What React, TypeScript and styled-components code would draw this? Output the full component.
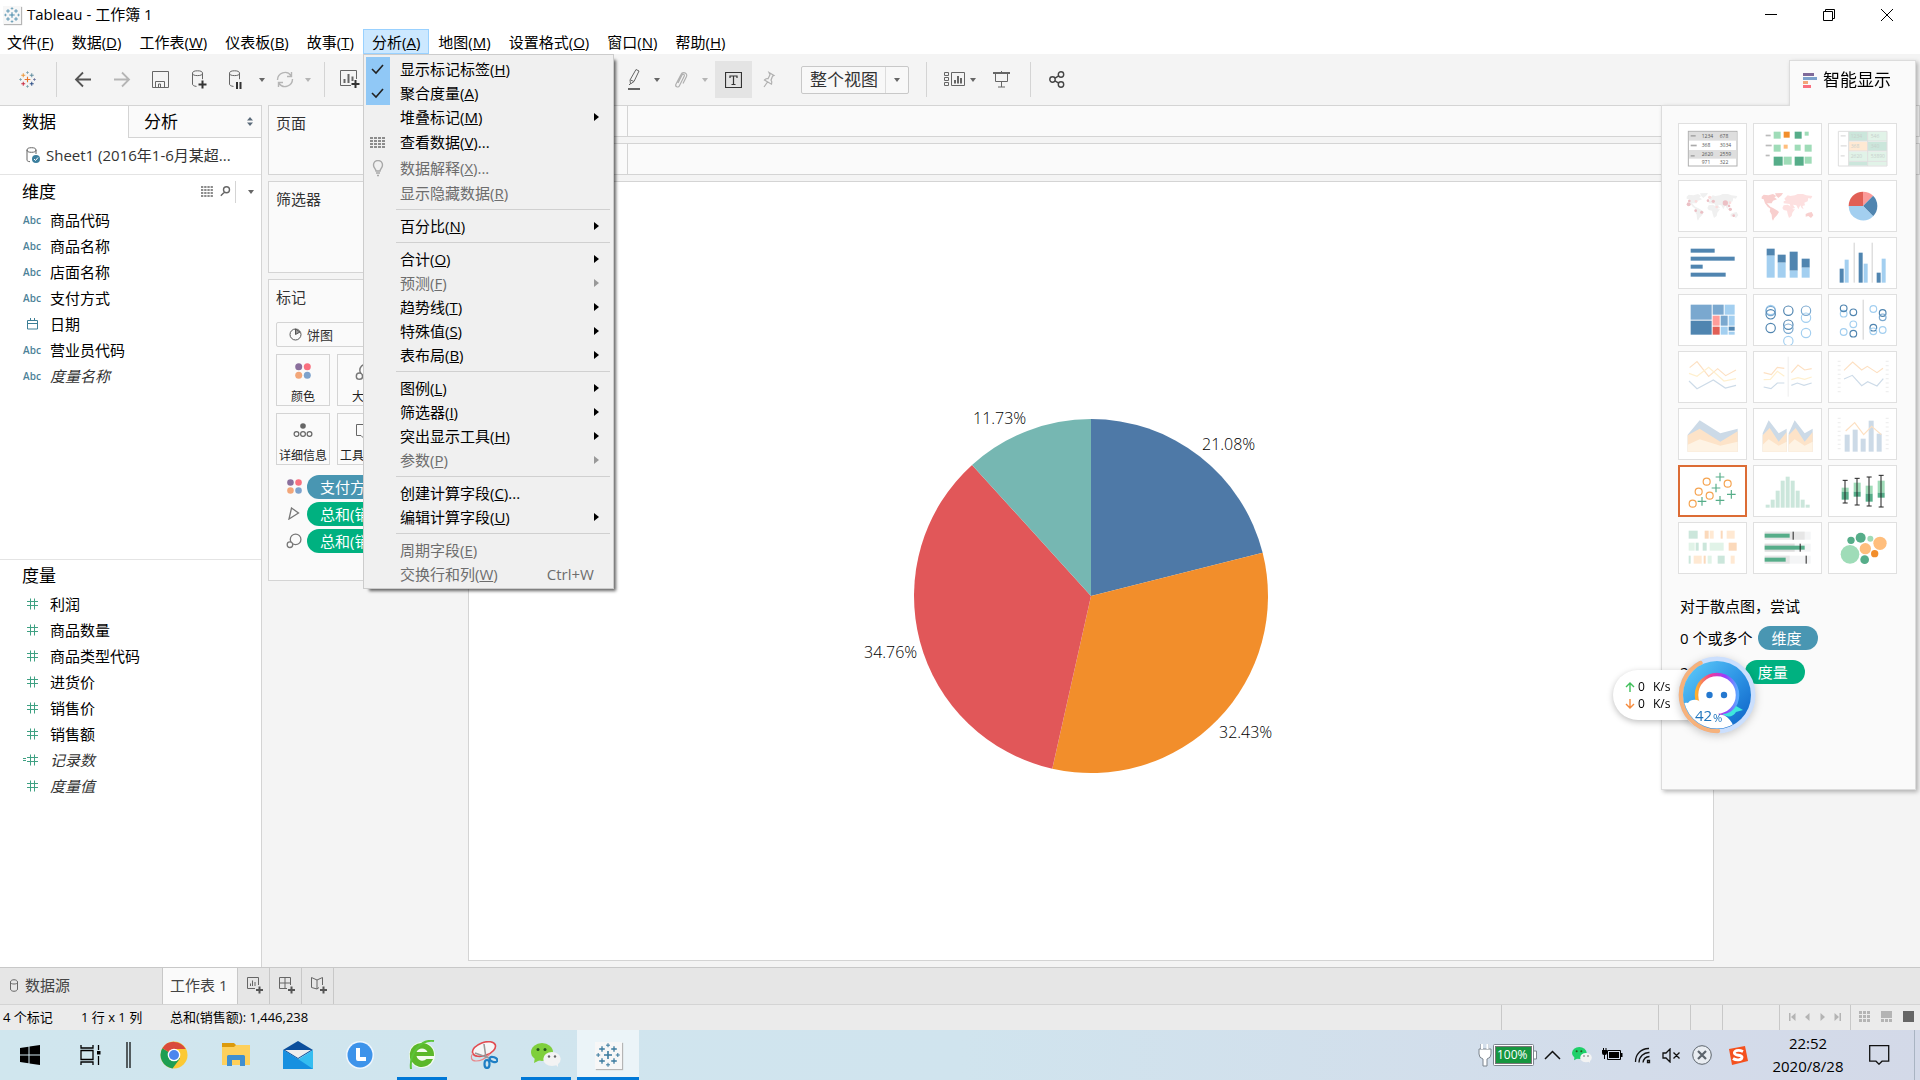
import React from 'react';
import styled, { createGlobalStyle } from 'styled-components';

const Global = createGlobalStyle`
  *, *::before, *::after { box-sizing: border-box; }
  body {
    margin: 0;
    font-family: "Open Sans", "Noto Sans CJK SC", sans-serif;
    font-size: 15px;
    line-height: 24px;
    color: #000;
    overflow: hidden;
  }
  button, select {
    font: inherit;
    color: inherit;
    border: 0;
    padding: 0;
    margin: 0;
    background: transparent;
    border-radius: 0;
    white-space: nowrap;
  }
  svg { display: block; flex: none; }
  ul { list-style: none; margin: 0; padding: 0; }
  h2, h3 { margin: 0; font-weight: 400; }
`;

const line = '#d4d4d4';

const App_ = styled.div`
  display: flex;
  flex-direction: column;
  height: 100vh;
  background: #f4f4f4;
`;

/* ---------- title bar and menu bar ---------- */

const TitleBar = styled.header`
  display: flex;
  align-items: center;
  height: 29px;
  padding: 0 4px 0 3px;
  background: #fff;
`;
const Title = styled.span`
  flex: 1;
  padding: 0 0 2px 6px;
`;
const WinButton = styled.button`
  display: flex;
  align-items: center;
  justify-content: center;
  width: 58px;
  height: 29px;
`;
const AppBadge = styled.span<{ $size: number }>`
  display: flex;
  align-items: center;
  justify-content: center;
  width: ${p => p.$size}px;
  height: ${p => p.$size}px;
  background: #f7f7f7;
  box-shadow: 1px 1px 1px #b5b5b5;
`;
const MenuBar = styled.nav`
  display: flex;
  height: 25px;
  margin-left: -2px;
  background: #fff;
`;
const MenuSlot = styled.div`
  position: relative;
`;
const MenuTitle = styled.button<{ $open?: boolean }>`
  height: 25px;
  line-height: 22px;
  padding: 0 8px;
  border: 1px solid ${p => (p.$open ? '#99d1ff' : 'transparent')};
  background: ${p => (p.$open ? '#cce8ff' : 'transparent')};
`;
const MenuPanel = styled.div`
  position: absolute;
  z-index: 10;
  top: 25px;
  left: 0;
  width: 251px;
  padding: 2px 3px 2px 2px;
  border: 1px solid #ccc;
  background: #f0f0f0;
  box-shadow: 4px 4px 3px -2px rgba(0, 0, 0, 0.6);
`;
const MenuRow = styled.button<{ $tall?: boolean }>`
  display: grid;
  grid-template-columns: 24px 1fr auto 16px;
  align-items: center;
  width: 100%;
  height: ${p => (p.$tall ? 26 : 24)}px;
  text-align: left;
  &:disabled { color: #6d6d6d; }
`;
const MenuMark = styled.span<{ $checked?: boolean }>`
  display: flex;
  align-items: center;
  justify-content: center;
  height: 100%;
  background: ${p => (p.$checked ? '#90c8f6' : 'transparent')};
`;
const MenuText = styled.span`
  padding-left: 10px;
`;
const MenuRule = styled.div`
  height: 9px;
  margin: 0 0 0 30px;
  display: flex;
  align-items: center;
  &::before {
    content: "";
    flex: 1;
    height: 1px;
    background: #d0d0d0;
  }
`;

/* ---------- toolbar ---------- */

const ToolBar = styled.div`
  display: flex;
  align-items: center;
  height: 51px;
`;
const Tool = styled.button<{ $w: number; $on?: boolean }>`
  display: flex;
  align-items: center;
  justify-content: center;
  flex: none;
  width: ${p => p.$w}px;
  height: 37px;
  background: ${p => (p.$on ? '#e4e4e4' : 'transparent')};
`;
const ToolRule = styled.span<{ $w: number }>`
  display: flex;
  justify-content: center;
  flex: none;
  width: ${p => p.$w}px;
  &::before {
    content: "";
    width: 1px;
    height: 35px;
    background: ${line};
  }
`;
const Gap = styled.span<{ $w: number }>`
  flex: none;
  width: ${p => p.$w}px;
`;
const FitBox = styled.label`
  display: flex;
  align-items: center;
  width: 108px;
  height: 28px;
  border: 1px solid #c8c8c8;
  border-radius: 2px;
  background: #f8f8f8;
  color: #333;
`;
const FitSelect = styled.select`
  appearance: none;
  flex: 1;
  min-width: 0;
  height: 26px;
  padding-left: 8px;
  font-size: 17px;
  line-height: 26px;
  border-right: 1px solid #dcdcdc;
`;
const FitCaret = styled.span`
  display: flex;
  justify-content: center;
  width: 22px;
`;

/* ---------- workspace ---------- */

const Workspace = styled.div`
  display: flex;
  flex: 1;
  min-height: 0;
`;
const Sidebar = styled.aside`
  display: flex;
  flex-direction: column;
  width: 262px;
  background: #fff;
  border-top: 1px solid ${line};
  border-right: 1px solid ${line};
`;
const SideTabs = styled.div`
  display: flex;
  height: 32px;
`;
const SideTab = styled.button<{ $active?: boolean }>`
  display: flex;
  align-items: center;
  justify-content: space-between;
  flex: ${p => (p.$active ? '0 0 128px' : '1')};
  padding: 0 8px 0 ${p => (p.$active ? 22 : 15)}px;
  font-size: 17px;
  background: ${p => (p.$active ? '#fff' : '#fafafa')};
  border: 0 solid ${line};
  border-width: ${p => (p.$active ? '0' : '0 0 1px 1px')};
`;
const Source = styled.div`
  display: flex;
  align-items: center;
  gap: 5px;
  height: 37px;
  padding: 0 0 2px 26px;
  color: #333;
  border-bottom: 1px solid #e4e4e4;
`;
const FieldGroup = styled.section<{ $grow?: boolean }>`
  flex: ${p => (p.$grow ? '1' : '0 0 385px')};
  padding-top: ${p => (p.$grow ? 0 : 1)}px;
  border-bottom: ${p => (p.$grow ? '0' : '1px')} solid #e4e4e4;
`;
const FieldHead = styled.div`
  display: flex;
  align-items: center;
  height: 31px;
  padding: 0 6px 0 22px;
`;
const FieldTitle = styled.h2`
  flex: 1;
  font-size: 17px;
`;
const HeadTool = styled.button<{ $ruled?: boolean }>`
  display: flex;
  align-items: center;
  justify-content: flex-end;
  width: ${p => (p.$ruled ? 20 : 18)}px;
  height: 22px;
  margin-left: ${p => (p.$ruled ? 4 : 0)}px;
  border-left: ${p => (p.$ruled ? 1 : 0)}px solid ${line};
`;
const Field = styled.li<{ $computed?: boolean }>`
  display: grid;
  grid-template-columns: 28px 1fr;
  align-items: center;
  height: 26px;
  padding-left: 22px;
  font-style: ${p => (p.$computed ? 'italic' : 'normal')};
  color: ${p => (p.$computed ? '#333' : '#000')};
`;
const FieldIcon = styled.span`
  display: flex;
  justify-content: center;
  width: 20px;
  font: 600 10px/16px "Open Sans", sans-serif;
  color: #4c8298;
`;

const Shelves = styled.div`
  display: flex;
  flex-direction: column;
  gap: 6px;
  width: 206px;
  padding: 0 7px 0 6px;
`;
const Card = styled.section<{ $h?: number }>`
  min-height: ${p => p.$h || 0}px;
  padding: 0 7px 26px;
  border: 1px solid ${line};
  background: #fafafa;
  color: #333;
`;
const CardTitle = styled.h3`
  height: 36px;
  font-size: 15px;
  line-height: 34px;
`;
const MarkType = styled.label`
  display: flex;
  align-items: center;
  gap: 5px;
  height: 25px;
  margin: 6px 0 7px;
  padding-left: 12px;
  border: 1px solid ${line};
  border-radius: 2px;
`;
const MarkSelect = styled.select`
  appearance: none;
  flex: 1;
  height: 22px;
  font-size: 13px;
  line-height: 22px;
`;
const MarkGrid = styled.div`
  display: grid;
  grid-template-columns: repeat(3, 54px);
  gap: 7px;
  padding-bottom: 8px;
`;
const MarkButton = styled.button`
  display: flex;
  flex-direction: column;
  align-items: center;
  justify-content: space-between;
  height: 52px;
  padding-top: 8px;
  font-size: 12px;
  line-height: 16px;
  color: #222;
  border: 1px solid ${line};
`;
const PillRow = styled.div`
  display: grid;
  grid-template-columns: 31px 1fr;
  align-items: center;
  height: 27px;
`;
const PillIcon = styled.span`
  display: flex;
  justify-content: center;
  width: 36px;
`;
const Pill = styled.span<{ $tone: 'dim' | 'measure'; $short?: boolean }>`
  display: inline-block;
  width: ${p => (p.$short ? '60px' : 'auto')};
  height: 24px;
  padding-left: 13px;
  border-radius: 12px;
  color: #fff;
  background: ${p => (p.$tone === 'dim' ? '#4996b2' : '#00b180')};
`;

const Stage = styled.main`
  display: flex;
  flex-direction: column;
  flex: 1;
  min-width: 0;
`;
const Shelf = styled.div`
  flex: none;
  height: 32px;
  margin-bottom: 6px;
  border: 1px solid ${line};
  background: #fafafa;
`;
const ShelfLabel = styled.div`
  width: 159px;
  height: 30px;
  border-right: 1px solid ${line};
`;
const Sheet = styled.div`
  display: flex;
  align-items: center;
  justify-content: center;
  flex: 1;
  margin: 0 206px 6px 0;
  padding-top: 49px;
  border: 1px solid ${line};
  background: #fff;
`;
const PieLabel = styled.text`
  font: 300 16px "Open Sans", sans-serif;
  fill: #000;
`;

/* ---------- show me ---------- */

const ShowMe = styled.aside`
  position: absolute;
  z-index: 4;
  top: 60px;
  right: 4px;
  width: 255px;
  filter: drop-shadow(2px 2px 2px rgba(0, 0, 0, 0.28));
`;
const ShowTab = styled.button`
  position: relative;
  z-index: 1;
  display: flex;
  align-items: center;
  gap: 5px;
  width: 127px;
  height: 46px;
  margin: 0 0 -1px auto;
  padding: 0 0 7px 13px;
  font-size: 17px;
  border: 1px solid #dcdcdc;
  border-bottom: 0;
  background: #fafafa;
`;
const ShowBody = styled.div`
  padding: 17px 16px 105px;
  border: 1px solid #dcdcdc;
  background: #fafafa;
`;
const Thumbs = styled.div`
  display: grid;
  grid-template-columns: repeat(3, 69px);
  gap: 5px 6px;
`;
const Thumb = styled.button<{ $picked?: boolean }>`
  display: flex;
  align-items: center;
  justify-content: center;
  height: 52px;
  overflow: hidden;
  background: #fff;
  border: ${p => (p.$picked ? '2px solid #dc6c35' : '1px solid #e0e0e0')};
`;
const Hint = styled.p<{ $gap: number }>`
  display: flex;
  align-items: center;
  gap: 6px;
  height: 24px;
  margin: ${p => p.$gap}px 0 0 2px;
`;

const Meter = styled.div`
  position: absolute;
  z-index: 6;
  top: 656px;
  right: 164px;
  display: flex;
  align-items: center;
  width: 143px;
`;
const Rates = styled.div`
  width: 104px;
  height: 50px;
  padding: 8px 0 0 12px;
  border-radius: 25px 0 0 25px;
  background: #fff;
  box-shadow: 0 2px 6px rgba(0, 0, 0, 0.25);
  font-size: 12px;
  line-height: 17px;
`;
const Rate = styled.div`
  display: grid;
  grid-template-columns: 13px 15px 1fr;
  align-items: center;
`;
const Ball = styled.svg`
  margin-left: -39px;
  filter: drop-shadow(0 2px 4px rgba(0, 0, 0, 0.2));
`;

/* ---------- sheet tabs and status ---------- */

const SheetTabs = styled.div`
  display: flex;
  flex: none;
  height: 37px;
  border-top: 1px solid #c8c8c8;
  background: #e6e6e6;
  color: #444;
`;
const SheetTab = styled.button<{ $w: number; $active?: boolean }>`
  display: flex;
  align-items: center;
  gap: 6px;
  width: ${p => p.$w}px;
  padding: 0 0 2px ${p => (p.$active ? 7 : p.$w > 100 ? 10 : 9)}px;
  background: ${p => (p.$active ? '#fafafa' : 'transparent')};
  border-right: 1px solid #c8c8c8;
`;
const StatusBar = styled.footer`
  display: flex;
  flex: none;
  height: 26px;
  border-top: 1px solid ${line};
  background: #ebebeb;
  font-size: 13px;
`;
const StatusText = styled.span<{ $w?: number }>`
  width: ${p => (p.$w ? p.$w + 'px' : 'auto')};
  flex: ${p => (p.$w ? 'none' : '1')};
  padding-left: 3px;
  line-height: 24px;
`;
const StatusCell = styled.div<{ $w: number; $views?: boolean }>`
  display: flex;
  align-items: center;
  justify-content: ${p => (p.$views ? 'space-between' : 'space-evenly')};
  flex: none;
  width: ${p => p.$w}px;
  padding: ${p => (p.$views ? '0 6px 2px 8px' : '0 0 2px')};
  border-left: 1px solid #c8c8c8;
`;

/* ---------- taskbar ---------- */

const TaskBar = styled.div`
  display: flex;
  flex: none;
  height: 50px;
  background: linear-gradient(90deg, #d0e6ee 0%, #d0e4ee 50%, #d3dcea 85%, #d3d9e8 100%);
`;
const Task = styled.button<{ $w?: number; $state?: 'open' | 'front' }>`
  display: flex;
  flex-direction: column;
  align-items: center;
  justify-content: center;
  position: relative;
  width: ${p => p.$w || 62}px;
  background: ${p => (p.$state === 'front' ? '#ebf4f8' : 'transparent')};
  &::after {
    content: "";
    position: absolute;
    bottom: 0;
    left: ${p => (p.$state === 'front' ? 0 : 6)}px;
    right: ${p => (p.$state === 'front' ? 0 : 6)}px;
    height: 3px;
    background: ${p => (p.$state ? '#0078d7' : 'transparent')};
  }
`;
const Tray = styled.div`
  display: flex;
  align-items: center;
  margin-left: auto;
`;
const TrayItem = styled.button<{ $w: number }>`
  display: flex;
  align-items: center;
  justify-content: center;
  width: ${p => p.$w}px;
  height: 50px;
`;
const Clock = styled.button`
  width: 102px;
  line-height: 23px;
  text-align: center;
`;
const Peek = styled.button`
  width: 6px;
  height: 50px;
  border-left: 1px solid #a9b4c2;
`;
const Charge = styled.text`
  font: 12px "Open Sans", sans-serif;
  fill: #fff;
`;
const Percent = styled.text`
  font: 15px "Open Sans", sans-serif;
  fill: #1d74bd;
`;
const Tiny = styled.text`
  font: 5px "Open Sans", sans-serif;
`;

/* ---------- icons ---------- */

const plus = (x: number, y: number, a: number) => `M${x - a} ${y}h${2 * a}M${x} ${y - a}v${2 * a}`;

function Logo({ size, mono }: { size: number; mono?: string }) {
  const marks: [number, number, number, number, string][] = [
    [12, 12, 4, 1.6, '#e8762c'],
    [6, 6, 2.8, 1.3, '#eb912c'],
    [18, 6, 2.8, 1.3, '#59879b'],
    [6, 18, 2.8, 1.3, '#c72035'],
    [18, 18, 2.8, 1.3, '#1f447e'],
    [12, 2.2, 2, 1, '#7099a6'],
    [12, 21.8, 2, 1, '#7099a6'],
    [2.2, 12, 2, 1, '#7099a6'],
    [21.8, 12, 2, 1, '#5c6692'],
  ];
  return (
    <svg width={size} height={size} viewBox="0 0 24 24" fill="none">
      {marks.map(([x, y, a, w, c], i) => (
        <path key={i} d={plus(x, y, a)} stroke={mono || c} strokeWidth={w} />
      ))}
    </svg>
  );
}

const Caret = ({ c = '#666' }: { c?: string }) => (
  <svg width="8" height="6" viewBox="0 0 8 6"><path d="M1 1h6L4 5z" fill={c} /></svg>
);

const Cyl = ({ kind }: { kind: 'plus' | 'pause' }) => (
  <svg width="15" height="20" viewBox="0 0 15 20" fill="none">
    <g stroke="#666">
      <ellipse cx="5.5" cy="3.2" rx="5" ry="2.4" />
      <path d="M.5 3.2v11c0 1 1.5 2 4 2.200M10.500 3.200v6" />
    </g>
    {kind === 'plus' ? (
      <path d="M6.500 14.500h8M10.500 10.500v8" stroke="#333" strokeWidth="2" />
    ) : (
      <path d="M8 12v7M11.500 12v7" stroke="#333" strokeWidth="2" />
    )}
  </svg>
);

const Dots = ({ s = 16 }: { s?: number }) => (
  <svg width={s} height={s} viewBox="0 0 16 16">
    <circle cx="3.700" cy="3.700" r="3.500" fill="#8a6f9c" />
    <circle cx="12.300" cy="3.700" r="3.500" fill="#f9707f" />
    <circle cx="3.700" cy="12.300" r="3.500" fill="#f2a679" />
    <circle cx="12.300" cy="12.300" r="3.500" fill="#7da2cc" />
  </svg>
);

const SizeRings = ({ s }: { s: number }) => (
  <svg width={s} height={s} viewBox="0 0 15 15" fill="#fafafa" stroke="#777" strokeWidth="1.200">
    <circle cx="9" cy="6" r="5" />
    <circle cx="3.700" cy="11" r="2.600" />
  </svg>
);

const Rows = ({ c = '#777' }: { c?: string }) => (
  <svg width="15" height="13" viewBox="0 0 15 13" fill={c}>
    {[0, 3, 6, 9].map(y => (
      <path key={y} d={`M0 ${y + 1}h3v2h-3zM4 ${y + 1}h3v2h-3zM8 ${y + 1}h3v2h-3zM12 ${y + 1}h3v2h-3z`} />
    ))}
  </svg>
);

const Hash = ({ calc }: { calc?: boolean }) => (
  <svg width="18" height="12" viewBox="0 0 18 12" fill="none" stroke="#3fa183" strokeWidth="1">
    <path d="M4 3.500h11M4 7.500h11M7.500 .5v11M11.500 .5v11" />
    {calc && <path d="M0 4.500h3M0 6.500h3" />}
  </svg>
);

const Cal = () => (
  <svg width="11" height="12" viewBox="0 0 11 12" fill="none" stroke="#3c7f96">
    <path d="M.5 2.500h10v8.500h-10zM.5 5.500h10M3.500 0v3M7.500 0v3" />
  </svg>
);

const WeChat = ({ s, c }: { s: number; c: string }) => (
  <svg width={s} height={s * 0.8} viewBox="0 0 30 24">
    <ellipse cx="11" cy="9" rx="11" ry="9" fill={c} />
    <path d="M4 14l-1 6 6-3z" fill={c} />
    <circle cx="7" cy="6.500" r="1.500" fill="#24551c" />
    <circle cx="14" cy="6.500" r="1.500" fill="#24551c" />
    <ellipse cx="21" cy="16" rx="8.700" ry="7" fill="#f3f3f3" />
    <path d="M24 21l3 3v-5z" fill="#f3f3f3" />
    <circle cx="18" cy="13.500" r="1.200" fill="#666" />
    <circle cx="24" cy="13.500" r="1.200" fill="#666" />
  </svg>
);

const pen = (d: string, c = '#666', w = 20, h = 20, sw = 1) => (
  <svg width={w} height={h} viewBox={`0 0 ${w} ${h}`} fill="none" stroke={c} strokeWidth={sw}><path d={d} /></svg>
);

/* ---------- chart type pictures ---------- */

const B = '#5085b0';
const L = '#a3cff0';
const G = '#56ad89';
const M = '#9fdcb8';

const rects = (list: [number, number, number, number, string][]) =>
  list.map(([x, y, w, h, f], i) => <rect key={i} x={x} y={y} width={w} height={h} fill={f} />);

const rings = (list: [number, number, string][], r: number) =>
  list.map(([x, y, s], i) => <circle key={i} cx={x} cy={y} r={r} fill="none" stroke={s} strokeWidth="3.500" />);

const lines = (list: [string, string][]) =>
  list.map(([d, s], i) => <path key={i} d={d} fill="none" stroke={s} strokeWidth="3.500" />);

const words = (list: [number, number, string][], fill: string) =>
  list.map(([x, y, s], i) => <Tiny key={i} fill={fill} transform={`translate(${x} ${y}) scale(3)`}>{s}</Tiny>);

function World({ west, east }: { west: string; east: string }) {
  return (
    <g>
      <path fill={west} d="M26 50L32 44 46 46 60 42 70 48 64 52 72 58 60 62 56 70 50 70 42 70 52 80 60 84 74 92 78 96 72 106 64 114 60 122 57 116 56 104 50 94 52 86 44 80 36 70 32 58 26 56z" />
      <path fill={west} d="M66 40L90 39 86 46 76 54 70 48zM158 102L166 98 176 96 181 106 174 114 166 108 158 110z" />
      <path fill={east} d="M92 70L92 64 98 62 94 56 104 46 112 48 126 46 134 42 150 42 160 46 178 48 174 56 166 54 164 64 154 68 156 76 148 78 152 88 146 84 142 76 136 88 130 76 120 74 126 84 118 86 112 78 110 72z" />
      <path fill={east} d="M92 76L104 74 116 80 120 88 126 88 118 98 116 108 108 114 104 102 102 92 92 90 88 84z" />
    </g>
  );
}

const ticks = (x: number) =>
  lines([0, 1, 2, 3, 4, 5, 6, 7].map(i => [`M${x} ${31 + i * 13}h9`, '#eee'] as [string, string]));

const pictures: React.ReactNode[] = [
  <g>
    <rect x="31" y="25" width="146" height="104" fill="#fff" stroke="#b0b0b0" strokeWidth="3" />
    {rects([[33, 27, 142, 26, '#dedede'], [33, 81, 142, 26, '#dedede'], [38, 36, 15, 5, '#aaa'], [38, 65, 18, 5, '#aaa'], [38, 96, 12, 5, '#aaa']])}
    {words([[71, 44, '1234'], [125, 44, '678'], [71, 72, '368'], [125, 72, '3034'], [71, 99, '2620'], [125, 99, '2559'], [71, 123, '971'], [125, 123, '322']], '#555')}
  </g>,
  <g>
    {rects([
      [38, 35, 15, 5, '#bbb'], [38, 65, 18, 5, '#bbb'], [38, 95, 12, 5, '#bbb'],
      [62, 26, 21, 21, M], [92, 26, 18, 18, '#f28e2b'], [125, 26, 21, 21, G], [155, 26, 12, 12, M],
      [62, 65, 21, 21, M], [92, 65, 12, 12, '#ffbe7d'], [125, 65, 18, 18, M], [155, 65, 21, 21, M],
      [62, 101, 27, 27, G], [92, 101, 24, 24, M], [125, 101, 27, 27, G], [155, 101, 21, 21, M],
    ])}
  </g>,
  <g>
    {rects([[62, 25, 57, 29, '#cbe6db'], [119, 25, 58, 29, '#e1f3e8'], [62, 56, 57, 28, '#ffe9d3'], [119, 56, 58, 28, '#cbe6db'], [62, 86, 57, 28, '#e1f3e8'], [119, 86, 58, 28, '#e1f3e8'], [62, 116, 57, 12, '#cbe6db'], [119, 116, 58, 12, '#e1f3e8'], [38, 36, 15, 5, '#e4e4e4'], [38, 66, 18, 5, '#e4e4e4'], [38, 96, 12, 5, '#e4e4e4']])}
    <path d="M31 25h146v104h-146zM62 25v104M119 25v104M62 54h115M62 84h115M62 115h115" fill="none" stroke="#dedede" strokeWidth="3" />
    {words([[68, 44, '1234'], [128, 44, '546'], [68, 75, '368'], [128, 75, '340'], [68, 104, '2620'], [128, 104, '53890']], '#c8d0cc')}
  </g>,
  <g>
    <World west="#f0f0f0" east="#f0f0f0" />
    {([[32, 73, 6], [34, 63, 4], [54, 64, 4], [53, 92, 4], [71, 97, 4.5], [95, 52, 5], [90, 62, 4], [106, 64, 5], [116, 81, 4], [142, 69, 8], [153, 78, 4], [156, 68, 4], [157, 88, 5], [167, 107, 4]] as number[][]).map(([x, y, r], i) => (
      <circle key={i} cx={x} cy={y} r={r} fill={i % 3 === 2 ? '#fbdcdc' : '#ecc0c5'} />
    ))}
  </g>,
  <World west="#f8cfce" east="#fde0e0" />,
  <g>
    <path d="M105 78V35A43 43 0 0 1 135.400 47.600z" fill="#fb9a99" />
    <path d="M105 78L135.400 47.600A43 43 0 0 1 135.400 108.400z" fill={B} />
    <path d="M105 78L135.400 108.400A43 43 0 0 1 62 78z" fill={L} />
    <path d="M105 78H62A43 43 0 0 1 105 35z" fill="#e15f56" />
  </g>,
  <g>{rects([[38, 35, 72, 12, B], [38, 59, 132, 12, B], [38, 83, 36, 12, B], [38, 107, 105, 12, B]])}</g>,
  <g>{rects([[41, 35, 24, 21, B], [41, 56, 24, 66, L], [74, 53, 24, 24, B], [74, 77, 24, 45, L], [110, 44, 24, 57, B], [110, 101, 24, 21, L], [146, 65, 24, 27, B], [146, 92, 24, 30, L]])}</g>,
  <g>{rects([[77, 17, 3, 120, '#d0d0d0'], [131, 17, 3, 120, '#d0d0d0'], [35, 95, 12, 42, B], [50, 68, 12, 69, L], [92, 47, 12, 90, B], [107, 80, 12, 57, L], [146, 107, 12, 30, B], [161, 65, 12, 72, L]])}</g>,
  <g>{rects([[38, 32, 63, 45, '#7aa8cf'], [38, 80, 63, 42, B], [104, 32, 33, 30, '#7aa8cf'], [140, 32, 30, 30, L], [104, 65, 21, 30, '#ff9d9a'], [128, 65, 21, 30, '#7aa8cf'], [152, 65, 18, 30, L], [104, 98, 21, 24, '#e15f56'], [128, 98, 21, 24, L], [152, 98, 18, 12, B], [152, 113, 18, 9, L]])}</g>,
  <g>{rings([[53, 48, L], [53, 51, '#7aa8cf'], [53, 61, B], [53, 102, B], [106, 50, B], [106, 92, B], [106, 104, '#7aa8cf'], [106, 141, L], [159, 71, L], [159, 50, '#7aa8cf'], [159, 117, L]], 14)}</g>,
  <g>
    <rect x="104" y="17" width="3" height="120" fill="#d0d0d0" />
    {rings([[47, 59, L], [47, 43, B], [76, 55, B], [76, 91, L], [47, 114, L], [76, 119, B], [136, 45, L], [164, 57, B], [164, 70, '#7aa8cf'], [136, 101, B], [136, 112, L], [164, 108, L]], 10)}
  </g>,
  <g>{lines([['M35 50L57 32 92 76 119 53 143 74 174 57', '#fde0c2'], ['M33 67L57 76 92 49 138 90 174 83', '#fff0cf'], ['M33 90L57 113 106 87 142 111 174 103', '#cddbe8']])}</g>,
  <g>
    <rect x="104" y="17" width="3" height="120" fill="#eee" />
    {lines([['M32 65L55 71 73 49 94 52', '#fde0c2'], ['M32 86L52 85 73 61 94 76', '#fff0cf'], ['M32 108L54 113 73 96 94 96', '#cddbe8'], ['M115 65L135 42 155 57 176 53', '#fde0c2'], ['M115 86L135 80 155 85 176 78', '#fff0cf'], ['M115 103L133 96 153 103 176 96', '#cddbe8']])}
  </g>,
  <g>{ticks(29)}{ticks(173)}{lines([['M48 58L74 33 101 57 118 46 147 65 165 52', '#fde0c2'], ['M48 84L73 73 101 104 119 92 147 105 166 83', '#cddbe8']])}</g>,
  <g>
    <path d="M29 80L65 37 127 76 179 62V131H29z" fill="#ccdae7" />
    <path d="M29 82L65 62 127 101 179 70V131H29z" fill="#fde3c8" />
    <path d="M29 110L65 94 127 113 179 101V131H29z" fill="#fef3e4" />
  </g>,
  <g>
    {[0, 78].map(x => (
      <g key={x} transform={`translate(${x} 0)`}>
        <path d="M29 76L47 37 77 76 101 62V131H29z" fill="#ccdae7" />
        <path d="M29 82L50 60 77 101 101 72V131H29z" fill="#fde3c8" />
        <path d="M29 110L47 94 77 113 101 101V131H29z" fill="#fef3e4" />
      </g>
    ))}
  </g>,
  <g>{ticks(29)}{ticks(173)}{rects([[50, 80, 15, 51, '#ccdae7'], [74, 65, 15, 66, '#ccdae7'], [98, 92, 15, 39, '#ccdae7'], [122, 38, 15, 93, '#ccdae7'], [146, 77, 15, 54, '#ccdae7']])}{lines([['M53 69L80 44 107 80 131 55 160 80', '#fde0c2']])}</g>,
  <g>
    {([[86, 50], [149, 56], [62, 80], [95, 92], [44, 116]] as number[][]).map(([x, y], i) => (
      <circle key={i} cx={x} cy={y} r="10.500" fill="none" stroke="#f5a34f" strokeWidth="3.500" />
    ))}
    {([[126, 36], [114, 69], [160, 88], [72, 109], [126, 106]] as number[][]).map(([x, y], i) => (
      <path key={i} d={plus(x, y, 13)} stroke={G} strokeWidth="3.500" />
    ))}
  </g>,
  <g>{rects([[38, 119, 12, 9, '#cbe6db'], [53, 104, 12, 24, '#cbe6db'], [68, 77, 12, 51, '#cbe6db'], [83, 47, 12, 81, '#cbe6db'], [98, 35, 12, 93, '#cbe6db'], [113, 47, 12, 81, '#cbe6db'], [128, 77, 12, 51, '#cbe6db'], [143, 104, 12, 24, '#cbe6db'], [158, 119, 12, 9, '#cbe6db']])}</g>,
  <g>
    {rects([[41, 68, 21, 12, M], [41, 80, 21, 24, G], [77, 53, 21, 27, M], [77, 80, 21, 15, G], [113, 62, 21, 24, M], [113, 86, 21, 24, G], [149, 47, 21, 36, M], [149, 83, 21, 15, G]])}
    <path d="M51 46V114M44 46h15M44 114h15M87 40V120M80 40h15M80 120h15M123 36V123M116 36h15M116 123h15M159 31V126M152 31h15M152 126h15" stroke="#222" strokeWidth="3" />
  </g>,
  <g>{rects([[32, 26, 27, 24, '#cbe6db'], [80, 26, 12, 24, '#fbd9bb'], [95, 26, 12, 24, '#ffe9d3'], [128, 26, 6, 24, '#fbd9bb'], [146, 26, 24, 24, '#ffe9d3'], [32, 62, 18, 24, '#e1f3e8'], [53, 62, 9, 24, '#cbe6db'], [74, 62, 12, 24, '#cbe6db'], [95, 62, 42, 24, '#e1f3e8'], [152, 62, 24, 24, '#fbd9bb'], [32, 101, 6, 24, '#cbe6db'], [47, 101, 24, 24, '#ffe9d3'], [77, 101, 6, 24, '#fbd9bb'], [89, 101, 12, 24, '#e1f3e8'], [119, 101, 21, 24, '#cbe6db'], [158, 101, 12, 24, '#ffe9d3']])}</g>,
  <g>{rects([[35, 29, 138, 24, '#f4f5f6'], [35, 29, 120, 24, '#e6e6e6'], [35, 35, 75, 12, G], [119, 29, 3, 24, '#222'], [35, 65, 138, 24, '#f4f5f6'], [35, 65, 90, 24, '#dcdcdc'], [35, 71, 120, 12, G], [140, 65, 3, 24, '#222'], [35, 101, 138, 24, '#f4f5f6'], [35, 101, 75, 24, '#e6e6e6'], [35, 107, 63, 12, G], [158, 101, 3, 24, '#222']])}</g>,
  <g>
    {([[66, 97, 28, M], [69, 55, 11, G], [98, 47, 15, G], [127, 50, 9, M], [112, 80, 17, '#ffbe7d'], [156, 64, 20, '#ffbe7d'], [140, 95, 11, '#f28e2b'], [110, 113, 13, G]] as [number, number, number, string][]).map(([x, y, r, f], i) => (
      <circle key={i} cx={x} cy={y} r={r} fill={f} />
    ))}
  </g>,
];

/* ---------- data ---------- */

type Item = { t: string; k: string; tail?: string; off?: boolean; sub?: boolean; icon?: 'check' | 'rows' | 'bulb'; keys?: string } | null;

const analysis: Item[] = [
  { t: '显示标记标签', k: 'H', icon: 'check' },
  { t: '聚合度量', k: 'A', icon: 'check' },
  { t: '堆叠标记', k: 'M', sub: true },
  { t: '查看数据', k: 'V', tail: '...', icon: 'rows' },
  { t: '数据解释', k: 'X', tail: '...', icon: 'bulb', off: true },
  { t: '显示隐藏数据', k: 'R', off: true },
  null,
  { t: '百分比', k: 'N', sub: true },
  null,
  { t: '合计', k: 'O', sub: true },
  { t: '预测', k: 'F', sub: true, off: true },
  { t: '趋势线', k: 'T', sub: true },
  { t: '特殊值', k: 'S', sub: true },
  { t: '表布局', k: 'B', sub: true },
  null,
  { t: '图例', k: 'L', sub: true },
  { t: '筛选器', k: 'I', sub: true },
  { t: '突出显示工具', k: 'H', sub: true },
  { t: '参数', k: 'P', sub: true, off: true },
  null,
  { t: '创建计算字段', k: 'C', tail: '...' },
  { t: '编辑计算字段', k: 'U', sub: true },
  null,
  { t: '周期字段', k: 'E', off: true },
  { t: '交换行和列', k: 'W', off: true, keys: 'Ctrl+W' },
];

const menus: [string, string][] = [
  ['文件', 'F'], ['数据', 'D'], ['工作表', 'W'], ['仪表板', 'B'], ['故事', 'T'],
  ['分析', 'A'], ['地图', 'M'], ['设置格式', 'O'], ['窗口', 'N'], ['帮助', 'H'],
];

const dimensions = ['商品代码', '商品名称', '店面名称', '支付方式', '日期', '营业员代码', '度量名称'];
const measures = ['利润', '商品数量', '商品类型代码', '进货价', '销售价', '销售额', '记录数', '度量值'];

const slices = [
  { v: 21.08, c: '#4e79a7', x: 111, y: -146 },
  { v: 32.43, c: '#f28e2b', x: 128, y: 142 },
  { v: 34.76, c: '#e15759', x: -227, y: 62 },
  { v: 11.73, c: '#76b7b2', x: -118, y: -172 },
];

function Pie() {
  const r = 177;
  let sum = 0;
  const at = (p: number) => {
    const a = (p / 100) * 2 * Math.PI;
    return `${(r * Math.sin(a)).toFixed(2)} ${(-r * Math.cos(a)).toFixed(2)}`;
  };
  return (
    <svg width="480" height="360" viewBox="-240 -180 480 360" role="img" aria-label="饼图" overflow="visible">
      {slices.map(s => {
        const from = at(sum);
        sum += s.v;
        return <path key={s.c} d={`M0 0L${from}A${r} ${r} 0 0 1 ${at(sum)}z`} fill={s.c} />;
      })}
      {slices.map(s => (
        <PieLabel key={s.c} x={s.x} y={s.y}>{s.v.toFixed(2)}%</PieLabel>
      ))}
    </svg>
  );
}

function AnalysisMenu() {
  return (
    <MenuPanel role="menu">
      {analysis.map((m, i) =>
        m === null ? (
          <MenuRule key={i} role="separator" />
        ) : (
          <MenuRow key={i} role="menuitem" disabled={m.off} $tall={m.icon === 'rows' || m.icon === 'bulb'}>
            <MenuMark $checked={m.icon === 'check'}>
              {m.icon === 'check' && pen('M2 6l4 4 7-8', '#222', 15, 13, 1.6)}
              {m.icon === 'rows' && <Rows c="#8c8c8c" />}
              {m.icon === 'bulb' && pen('M4 11c0-2-2.500-3-2.500-6a4.500 4.500 0 0 1 9 0c0 3-2.500 4-2.500 6zM4 13h4M5 15.500h2', '#a8a8a8', 12, 17, 1.4)}
            </MenuMark>
            <MenuText>{m.t}(<u>{m.k}</u>){m.tail}</MenuText>
            <span>{m.keys}</span>
            {m.sub && <svg width="6" height="8" viewBox="0 0 6 8"><path d="M0 0l5 4-5 4z" fill={m.off ? '#999' : '#000'} /></svg>}
          </MenuRow>
        ),
      )}
    </MenuPanel>
  );
}

function Tools() {
  return (
    <ToolBar>
      <Tool $w={54} aria-label="起始页"><Logo size={17} /></Tool>
      <ToolRule $w={5} />
      <Gap $w={4} />
      <Tool $w={39} aria-label="撤消">{pen('M17 8.500H2M9 1.500L2 8.500l7 7', '#555', 18, 17, 1.8)}</Tool>
      <Tool $w={39} aria-label="重做">{pen('M1 8.500H16M9 1.500l7 7-7 7', '#b5b5b5', 18, 17, 1.8)}</Tool>
      <Tool $w={39} aria-label="保存">{pen('M.5.5h16v16H.5zM3.500 16V10.500h9V16M6.500 16v-3h2v3', '#666', 17, 17)}</Tool>
      <Tool $w={39} aria-label="新建数据源"><Cyl kind="plus" /></Tool>
      <Tool $w={35} aria-label="暂停更新"><Cyl kind="pause" /></Tool>
      <Tool $w={16} aria-label="更新选项"><Caret /></Tool>
      <Tool $w={30} aria-label="刷新">{pen('M1.500 9A7.500 7.500 0 0 1 15 4.500M16.500 8A7.500 7.500 0 0 1 3 12.500M15.500 1v4.500h-4.500M2.500 16v-4.500h4.500', '#b5b5b5', 18, 17, 1.4)}</Tool>
      <Tool $w={16} aria-label="刷新选项"><Caret c="#b5b5b5" /></Tool>
      <ToolRule $w={17} />
      <Tool $w={34} aria-label="新建工作表">
        <svg width="20" height="19" viewBox="0 0 20 19" fill="none" stroke="#666">
          <path d="M16.500 9V.5H.5v15H11" />
          <path d="M4.500 13V9M8.500 13V4M12.500 11V6.500" strokeWidth="2" />
          <path d="M11.500 14h8M15.500 10v8" stroke="#333" strokeWidth="2" />
        </svg>
      </Tool>
      <Gap $w={252} />
      <Tool $w={30} aria-label="突出显示">
        <svg width="14" height="23" viewBox="0 0 14 23" fill="none" stroke="#666">
          <path d="M9 1.500l3 1.500-5 10.500-3.500 2.500-.5-4zM3.500 12l3.500 1.500M2 17l1.500-1.500" />
          <path d="M1 21h12" strokeWidth="2" />
        </svg>
      </Tool>
      <Tool $w={16} aria-label="突出显示选项"><Caret /></Tool>
      <Tool $w={32} aria-label="组成员">{pen('M4 12l4-8c.6-1.500 3-.5 2.300 1l-5 10c-1 2-4.500.5-3.500-1.500L7 3.500c1.500-3.500 7-1.500 5.500 2L9 12.500', '#b0b0b0', 14, 18, 1.2)}</Tool>
      <Tool $w={16} aria-label="组选项"><Caret c="#b5b5b5" /></Tool>
      <Gap $w={2} />
      <Tool $w={37} $on aria-label="显示标记标签">{pen('M.5.5h16v15H.5zM5 6V4h7v2M8.500 4v8.500M6.500 12.500h4', '#333', 17, 16, 1.2)}</Tool>
      <Tool $w={34} aria-label="固定轴">{pen('M7 1.500l5 3-1.500.7-1.500 4c1 1 1 2.500.5 4L2.500 9c1-1.200 2.500-1.600 3.500-1.200l2-4zM5.500 11L2 16', '#b0b0b0', 14, 17, 1.2)}</Tool>
      <Gap $w={15} />
      <FitBox>
        <FitSelect aria-label="适合"><option>整个视图</option></FitSelect>
        <FitCaret><Caret /></FitCaret>
      </FitBox>
      <ToolRule $w={34} />
      <Tool $w={22} aria-label="显示/隐藏卡">
        <svg width="21" height="15" viewBox="0 0 21 15" fill="none" stroke="#666">
          <path d="M.5.5h4v3h-4zM.5 5.500h4v3h-4zM.5 10.500h4v3h-4zM7.500.5h13v13h-13z" />
          <path d="M11 11.500V8M14 11.500V4M17 11.500V6" strokeWidth="2" />
        </svg>
      </Tool>
      <Tool $w={16} aria-label="卡选项"><Caret /></Tool>
      <Tool $w={40} aria-label="演示模式">
        <svg width="17" height="17" viewBox="0 0 17 17" fill="none" stroke="#666">
          <path d="M0 2h17" strokeWidth="2" />
          <path d="M2.500 2v8.500h12V2M8.500 0v16M5 16h7" />
          <path d="M3 3h11v7H3z" fill="#f4f4f4" stroke="none" />
        </svg>
      </Tool>
      <ToolRule $w={18} />
      <Tool $w={36} aria-label="共享">
        <svg width="16" height="17" viewBox="0 0 16 17" fill="none" stroke="#444" strokeWidth="1.400">
          <circle cx="3.500" cy="8.500" r="2.700" />
          <circle cx="12" cy="3.500" r="2.700" />
          <circle cx="12" cy="13.500" r="2.700" />
          <path d="M6 7.200l3.700-2.400M6 9.800l3.700 2.400" />
        </svg>
      </Tool>
    </ToolBar>
  );
}

function DataPane() {
  return (
    <Sidebar>
      <SideTabs role="tablist">
        <SideTab role="tab" aria-selected $active>数据</SideTab>
        <SideTab role="tab" aria-selected={false}>
          分析
          <svg width="6" height="9" viewBox="0 0 6 9"><path d="M0 3.500L3 0l3 3.500zM0 5.500h6L3 9z" fill="#5b6b7a" /></svg>
        </SideTab>
      </SideTabs>
      <Source>
        <svg width="15" height="17" viewBox="0 0 15 17" fill="none" stroke="#666">
          <ellipse cx="5.500" cy="3" rx="4.500" ry="2.300" />
          <path d="M1 3v10c0 1 1 1.500 3 1.700M10 3v4" />
          <circle cx="10" cy="12" r="4" fill="#3c7f9e" stroke="none" />
          <path d="M8 12l1.500 1.500L12 10.500" stroke="#fff" />
        </svg>
        Sheet1 (2016年1-6月某超...
      </Source>
      <FieldGroup>
        <FieldHead>
          <FieldTitle>维度</FieldTitle>
          <HeadTool aria-label="查看数据"><svg width="12" height="11" viewBox="0 0 12 11"><path d="M0 1h12M0 4h12M0 7h12M0 10h12" stroke="#666" strokeWidth="1.400" strokeDasharray="2.300 .9" /></svg></HeadTool>
          <HeadTool aria-label="查找字段">{pen('M9.500 3.800a3 3 0 1 1-6 0a3 3 0 1 1 6 0zM4.300 6.200L.8 9.700', '#666', 11, 11, 1.4)}</HeadTool>
          <HeadTool $ruled aria-label="数据窗格选项"><Caret /></HeadTool>
        </FieldHead>
        <ul>
          {dimensions.map((d, i) => (
            <Field key={d} $computed={i === 6}>
              <FieldIcon>{d === '日期' ? <Cal /> : 'Abc'}</FieldIcon>
              {d}
            </Field>
          ))}
        </ul>
      </FieldGroup>
      <FieldGroup $grow>
        <FieldHead><FieldTitle>度量</FieldTitle></FieldHead>
        <ul>
          {measures.map((d, i) => (
            <Field key={d} $computed={i > 5}>
              <FieldIcon><Hash calc={i === 6} /></FieldIcon>
              {d}
            </Field>
          ))}
        </ul>
      </FieldGroup>
    </Sidebar>
  );
}

function Cards() {
  return (
    <Shelves>
      <Card $h={70}><CardTitle>页面</CardTitle></Card>
      <Card $h={92}><CardTitle>筛选器</CardTitle></Card>
      <Card>
        <CardTitle>标记</CardTitle>
        <MarkType>
          <svg width="13" height="13" viewBox="0 0 13 13" fill="none" stroke="#555"><circle cx="6.500" cy="6.500" r="5.500" /><path d="M6.500 1v5.500L11 4z" fill="#999" /></svg>
          <MarkSelect aria-label="标记类型"><option>饼图</option></MarkSelect>
        </MarkType>
        <MarkGrid>
          <MarkButton><Dots />颜色</MarkButton>
          <MarkButton><SizeRings s={18} />大小</MarkButton>
          <span />
          <MarkButton>
            <svg width="20" height="16" viewBox="0 0 20 16" fill="none" stroke="#666" strokeWidth="1.200"><circle cx="10" cy="4" r="2.800" fill="#666" stroke="none" /><circle cx="3.500" cy="12" r="2.400" /><circle cx="10" cy="12" r="2.400" /><circle cx="16.500" cy="12" r="2.400" /></svg>
            详细信息
          </MarkButton>
          <MarkButton>{pen('M.5 2.500h16v11H9l-2 2-2-2H.5z', '#666', 17, 17)}工具提示</MarkButton>
        </MarkGrid>
        <PillRow><PillIcon><Dots s={15} /></PillIcon><Pill $tone="dim">支付方式</Pill></PillRow>
        <PillRow><PillIcon>{pen('M3.500 1l7 5-9.500 6z', '#777', 12, 13, 1.3)}</PillIcon><Pill $tone="measure">总和(销售额)</Pill></PillRow>
        <PillRow><PillIcon><SizeRings s={16} /></PillIcon><Pill $tone="measure">总和(销售额)</Pill></PillRow>
      </Card>
    </Shelves>
  );
}

function ShowMePanel() {
  return (
    <ShowMe>
      <ShowTab>
        <svg width="15" height="15" viewBox="0 0 15 15">
          <path d="M0 0h11v3H0z" fill="#7f6a99" /><path d="M0 4h14v3H0z" fill="#7da2cc" /><path d="M0 8h5v3H0z" fill="#f2a679" /><path d="M0 12h8v3H0z" fill="#f9707f" />
        </svg>
        智能显示
      </ShowTab>
      <ShowBody>
        <Thumbs>
          {pictures.map((p, i) => (
            <Thumb key={i} $picked={i === 18} aria-label={`图表类型 ${i + 1}`}>
              <svg width="67" height="50" viewBox="3 3 201 150">{p}</svg>
            </Thumb>
          ))}
        </Thumbs>
        <Hint $gap={20}>对于散点图，尝试</Hint>
        <Hint $gap={8}>0 个或多个<Pill $tone="dim" $short>维度</Pill></Hint>
        <Hint $gap={10}>2 到 4 个<Pill $tone="measure" $short>度量</Pill></Hint>
      </ShowBody>
    </ShowMe>
  );
}

function SpeedMeter() {
  return (
    <Meter>
      <Rates>
        <Rate>{pen('M5 10V1M1 5l4-4 4 4', '#3fbf5a', 10, 10, 1.4)}<span>0</span><span>K/s</span></Rate>
        <Rate>{pen('M5 0v9M1 5l4 4 4-4', '#f58a3c', 10, 10, 1.4)}<span>0</span><span>K/s</span></Rate>
      </Rates>
      <Ball width="78" height="78" viewBox="0 0 78 78">
        <defs>
          <linearGradient id="sky" x1="0" y1="0" x2="1" y2="1"><stop offset="0" stopColor="#62d0fb" /><stop offset=".5" stopColor="#2f96e6" /><stop offset="1" stopColor="#0b5fc4" /></linearGradient>
          <linearGradient id="bow" x1="0" y1="0" x2="1" y2="0"><stop offset="0" stopColor="#ffb02e" /><stop offset=".35" stopColor="#f0389a" /><stop offset=".7" stopColor="#9a3cff" /><stop offset="1" stopColor="#5aa8ff" /></linearGradient>
          <clipPath id="ballClip"><circle cx="39" cy="39" r="33.500" /></clipPath>
        </defs>
        <circle cx="39" cy="39" r="36" fill="none" stroke="#cbdffd" strokeWidth="5" />
        <path d="M40 75A36 36 0 0 1 22.500 7" fill="none" stroke="#f6b27c" strokeWidth="4.500" strokeLinecap="round" />
        <circle cx="39" cy="39" r="34" fill="url(#sky)" />
        <g clipPath="url(#ballClip)">
          <circle cx="39" cy="39" r="20.500" fill="#fff" stroke="url(#bow)" strokeWidth="3.500" />
          <path d="M44 58c6 0 11-3 14-8l7 4-7 2c-3 5-8 6-14 2z" fill="#3fe6dc" />
          <path d="M0 54c2-6 6-8 10-7 3-5 12-4 14 1 8-1 15 4 17 11 6-1 11 4 14 10v12H0z" fill="#fff" />
        </g>
        <circle cx="31.500" cy="39" r="3.200" fill="#2478cf" />
        <circle cx="46" cy="39" r="3.200" fill="#2478cf" />
        <Percent x="17" y="65">42</Percent>
        <Percent x="0" y="0" transform="translate(35 66) scale(.75)">%</Percent>
      </Ball>
    </Meter>
  );
}

function SheetBar() {
  const add = 'M9 14h7M12.500 10.500v7';
  const shapes: [string, string][] = [
    ['新建工作表', 'M8 12.500H.5V1.500h11V9M3.500 10V7.500M5.500 10V4.500M8 10V6'],
    ['新建仪表板', 'M8 12.500H.5V1.500h11V9M6 1.500v11M.5 7h11'],
    ['新建故事', 'M8 11.500L6 13 .5 11.500V1.500L6 4l5.500-2.500V9M6 4v9'],
  ];
  return (
    <SheetTabs>
      <SheetTab $w={163}>
        {pen('M.5 3c0-3 7-3 7 0v7c0 3-7 3-7 0zM.5 3.500c0 2 7 2 7 0', '#666', 9, 13)}
        数据源
      </SheetTab>
      <SheetTab $w={75} $active>工作表 1</SheetTab>
      {shapes.map(([name, d]) => (
        <SheetTab key={name} $w={32} aria-label={name}>
          <svg width="17" height="18" viewBox="0 0 17 18" fill="none" stroke="#666">
            <path d={d} />
            <path d={add} strokeWidth="2" stroke="#555" />
          </svg>
        </SheetTab>
      ))}
    </SheetTabs>
  );
}

function Status() {
  const g = '#b4b4b4';
  return (
    <StatusBar>
      <StatusText $w={78}>4 个标记</StatusText>
      <StatusText $w={89}>1 行 x 1 列</StatusText>
      <StatusText>总和(销售额): 1,446,238</StatusText>
      <StatusCell $w={157} /><StatusCell $w={32} /><StatusCell $w={32} /><StatusCell $w={57} />
      <StatusCell $w={71}>
        <svg width="7" height="8" viewBox="0 0 7 8"><path d="M0 0h1.500v8H0zM6.500 0v8L2 4z" fill={g} /></svg>
        <svg width="5" height="8" viewBox="0 0 5 8"><path d="M4.500 0v8L0 4z" fill={g} /></svg>
        <svg width="5" height="8" viewBox="0 0 5 8"><path d="M.5 0v8L5 4z" fill={g} /></svg>
        <svg width="7" height="8" viewBox="0 0 7 8"><path d="M5.500 0H7v8H5.500zM.5 0v8L5 4z" fill={g} /></svg>
      </StatusCell>
      <StatusCell $w={70} $views>
        <svg width="11" height="11" viewBox="0 0 11 11"><path d="M0 1.500h11M0 5.500h11M0 9.500h11" stroke={g} strokeWidth="3" strokeDasharray="3 1" /></svg>
        <svg width="11" height="11" viewBox="0 0 11 11"><path d="M0 0h11v7H0z" fill={g} /><path d="M0 9.500h11" stroke={g} strokeWidth="3" strokeDasharray="3 1" /></svg>
        <svg width="11" height="11" viewBox="0 0 11 11"><path d="M0 0h11v11H0z" fill="#666" /></svg>
      </StatusCell>
    </StatusBar>
  );
}

function Taskbar() {
  return (
    <TaskBar>
      <Task $w={60} aria-label="开始"><svg width="20" height="20" viewBox="0 0 20 20"><path d="M0 3l8.500-1.200v7.700H0zM9.500 1.600L20 0v9.500H9.500zM0 10.500h8.500v7.700L0 17zM9.500 10.500H20V20L9.500 18.400z" /></svg></Task>
      <Task $w={60} aria-label="任务视图">
        <svg width="21" height="20" viewBox="0 0 21 20" fill="none" stroke="#000" strokeWidth="1.300"><path d="M1 0v3h12V0M1 20v-3h12v3M1 5.500h12v9H1zM18.500 0v5M18.500 11v9" /><path d="M17 6h3.500v3.500H17z" fill="#000" stroke="none" /></svg>
      </Task>
      <Task $w={16} aria-label="分隔">{pen('M1 0v26M4 0v26', '#000', 5, 26, 1.2)}</Task>
      <Gap $w={7} />
      <Task aria-label="Chrome">
        <svg width="28" height="28" viewBox="0 0 28 28">
          <circle cx="14" cy="14" r="13.500" fill="#fcc934" />
          <path d="M14 14L2.300 7.300A13.500 13.500 0 0 0 12.500 27.400L20 17.500z" fill="#1e9e52" />
          <path d="M14 14L2.300 7.300A13.500 13.500 0 0 1 25.700 8H14z" fill="#d94a3c" />
          <circle cx="14" cy="14" r="6.300" fill="#fff" /><circle cx="14" cy="14" r="5" fill="#4a86ee" />
        </svg>
      </Task>
      <Task aria-label="文件资源管理器">
        <svg width="28" height="24" viewBox="0 0 28 24"><path d="M0 0h12l2 2v3H0z" fill="#dc9a0b" /><path d="M0 4h12l2-2h14v20H0z" fill="#fdd05c" /><path d="M5 23V13.500q0-1.500 1.500-1.500h15q1.500 0 1.500 1.500V23h-5v-6h-8v6z" fill="#3f8fd0" /></svg>
      </Task>
      <Task aria-label="邮件">
        <svg width="30" height="28" viewBox="0 0 30 28"><path d="M0 9L15 0l15 9-15 9z" fill="#0b4f9c" /><path d="M0 9v19h30z" fill="#1b8be0" /><path d="M30 9v19L0 28z" fill="#35bdf0" /><path d="M0 9l15 9L30 28H0z" fill="#1690e0" /><path d="M2 9h26L15 17z" fill="#eee" /></svg>
      </Task>
      <Task aria-label="鲁大师">
        <svg width="28" height="28" viewBox="0 0 28 28"><circle cx="14" cy="14" r="14" fill="#eef6fd" /><circle cx="14" cy="14" r="12.500" fill="#3d93ea" /><path d="M10 7h4v9h6v4H12q-2 0-2-2z" fill="#fff" /></svg>
      </Task>
      <Task $state="open" aria-label="360浏览器">
        <svg width="28" height="30" viewBox="0 0 28 30" fill="none">
          <circle cx="14" cy="15" r="13" fill="#f3fbef" />
          <path d="M14 3a12 12 0 1 0 11 16h-6.500a6 6 0 0 1-10-3H26A12 12 0 0 0 14 3zM8.500 12a6 6 0 0 1 11 0z" fill="#5cb82a" fillRule="evenodd" />
          <path d="M26 1C14-1 1 12 3 29" stroke="#5cc43a" strokeWidth="2" />
        </svg>
      </Task>
      <Task aria-label="截图工具">
        <svg width="28" height="28" viewBox="0 0 28 28" fill="none">
          <ellipse cx="14" cy="8" rx="12" ry="6.500" fill="#f6f6f6" stroke="#e14b50" strokeWidth="1.600" transform="rotate(-20 14 8)" />
          <path d="M3 12c-3 4-2 8 3 8 6 0 10-3 14-7" stroke="#e8898c" strokeWidth="1.200" />
          <path d="M14 3l2 14M5 12l14 5" stroke="#999" strokeWidth="1.600" />
          <ellipse cx="17" cy="23" rx="2.500" ry="4" stroke="#1f7fc4" strokeWidth="2.200" />
          <ellipse cx="23.500" cy="18.500" rx="4" ry="2.300" stroke="#1f7fc4" strokeWidth="2.200" transform="rotate(20 23.500 18.500)" />
        </svg>
      </Task>
      <Task $state="open" aria-label="微信"><WeChat s={30} c="#7fcf3c" /></Task>
      <Task $state="front" aria-label="Tableau"><AppBadge $size={27}><Logo size={24} mono="#3a7a9e" /></AppBadge></Task>
      <Tray>
        <TrayItem $w={62} aria-label="电池 100%">
          <svg width="60" height="24" viewBox="0 0 60 24">
            <path d="M3 1v5M10 1v5M1 6h12v5q0 4-4 5v7H5v-7q-4-1-4-5z" fill="#fff" stroke="#7c858e" strokeWidth="1" />
            <path d="M4 1v5M9.500 1v5" stroke="#fff" strokeWidth="2" />
            <rect x="15.500" y="1.500" width="40" height="21" rx="1" fill="#fff" stroke="#7c858e" />
            <path d="M55.500 8h3v8h-3z" fill="#fff" stroke="#7c858e" />
            <rect x="17.500" y="3.500" width="36" height="17" fill="#16963f" stroke="#777" />
            <Charge x="19" y="16">100%</Charge>
          </svg>
        </TrayItem>
        <TrayItem $w={27} aria-label="显示隐藏的图标">{pen('M1 9l7.500-7.500L16 9', '#111', 17, 10, 1.5)}</TrayItem>
        <TrayItem $w={32} aria-label="微信"><WeChat s={20} c="#1fd069" /></TrayItem>
        <TrayItem $w={29} aria-label="电源">
          <svg width="21" height="14" viewBox="0 0 21 14"><path d="M5.500 2.500h13v9h-13z" fill="none" stroke="#000" /><path d="M7 4h10v6H7zM19 5h1.500v4H19zM0 2h5v3q0 2-2 2v4H2V7Q0 7 0 5zM1 0h1v2H1zM3.500 0h1v2h-1z" /></svg>
        </TrayItem>
        <TrayItem $w={30} aria-label="网络">{pen('M1.500 15A13 13 0 0 1 15 1.500M5 15.500A10 10 0 0 1 15.500 5.500M9 15.500A7 7 0 0 1 15.500 9.500M13.500 13.500h2v2h-2z', '#111', 17, 17, 1.3)}</TrayItem>
        <TrayItem $w={29} aria-label="静音">{pen('M1 5h3l4-4v13l-4-4H1zM11.500 4.500l6 6M17.500 4.500l-6 6', '#111', 19, 15, 1.3)}</TrayItem>
        <TrayItem $w={32} aria-label="已断开">
          <svg width="20" height="20" viewBox="0 0 20 20" fill="none"><circle cx="10" cy="10" r="9.300" fill="#e9edf2" stroke="#5c646c" /><path d="M6 6l8 8M14 6l-8 8" stroke="#5c646c" strokeWidth="2.200" /></svg>
        </TrayItem>
        <TrayItem $w={39} aria-label="搜狗输入法">
          <svg width="20" height="19" viewBox="0 0 20 19"><path d="M1 3L17 0l3 15-16 4z" fill="#f4511e" /><path d="M15 5.500C10 3 5.500 5 6.500 7.500s8 1 7.500 4-6 3-9 1" fill="none" stroke="#fff" strokeWidth="2.800" /></svg>
        </TrayItem>
        <Clock>22:52<br />2020/8/28</Clock>
        <TrayItem $w={40} aria-label="通知">{pen('M.7.700h19v15.500H13l-3 3-3-3H.7z', '#111', 21, 20, 1.3)}</TrayItem>
        <Gap $w={15} />
        <Peek aria-label="显示桌面" />
      </Tray>
    </TaskBar>
  );
}

export default function App() {
  return (
    <App_>
      <Global />
      <TitleBar>
        <AppBadge $size={18}><Logo size={16} mono="#4a8bab" /></AppBadge>
        <Title>Tableau - 工作簿 1</Title>
        <WinButton aria-label="最小化">{pen('M0 5.500h12', '#000', 12, 12)}</WinButton>
        <WinButton aria-label="还原">{pen('M.5 2.500h9v9h-9zM2.500 2.500v-2h9v9h-2', '#000', 12, 12)}</WinButton>
        <WinButton aria-label="关闭">{pen('M0 0l12 12M12 0L0 12', '#000', 12, 12)}</WinButton>
      </TitleBar>
      <MenuBar>
        {menus.map(([t, k]) => (
          <MenuSlot key={t}>
            <MenuTitle $open={t === '分析'}>{t}(<u>{k}</u>)</MenuTitle>
            {t === '分析' && <AnalysisMenu />}
          </MenuSlot>
        ))}
      </MenuBar>
      <Tools />
      <Workspace>
        <DataPane />
        <Cards />
        <Stage>
          <Shelf aria-label="列"><ShelfLabel /></Shelf>
          <Shelf aria-label="行"><ShelfLabel /></Shelf>
          <Sheet><Pie /></Sheet>
        </Stage>
      </Workspace>
      <SheetBar />
      <Status />
      <Taskbar />
      <ShowMePanel />
      <SpeedMeter />
    </App_>
  );
}
